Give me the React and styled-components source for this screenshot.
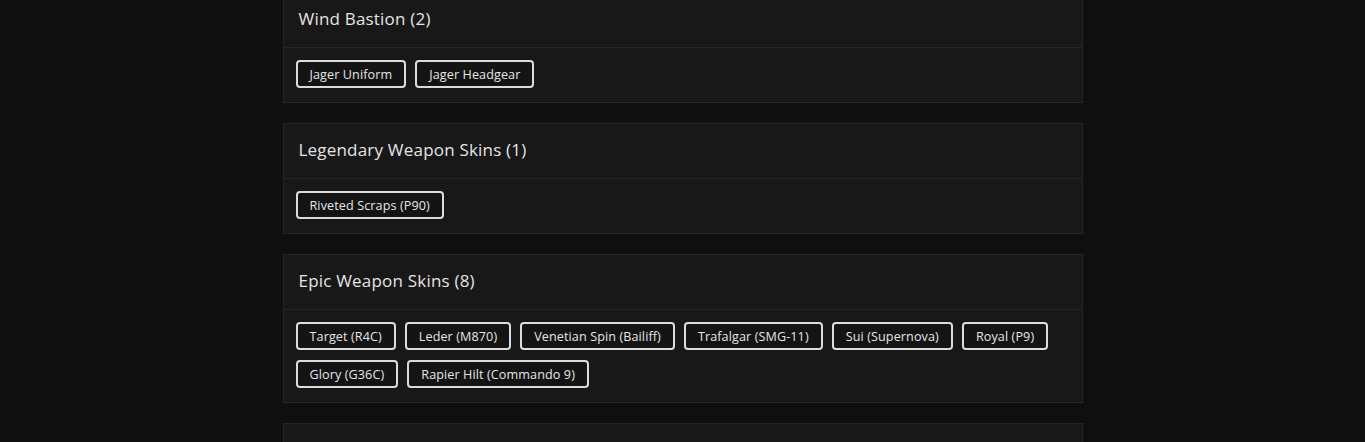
import React from 'react';
import styled, { createGlobalStyle } from 'styled-components';

const GlobalStyle = createGlobalStyle`
  html, body {
    margin: 0;
    padding: 0;
    background: #0f0f0f;
    overflow: hidden;
  }
  body {
    font-family: 'Open Sans', 'Noto Sans', sans-serif;
    color: #e2e2e2;
  }
`;

const Page = styled.div`
  width: 800px;
  margin: -8px auto 0;
  display: flex;
  flex-direction: column;
  gap: 20px;
`;

const Card = styled.section`
  background: #181818;
  border: 1px solid #262626;
`;

const CardHeader = styled.div`
  height: 55px;
  box-sizing: border-box;
  display: flex;
  align-items: center;
  padding: 0 15px 3px;
  border-bottom: 1px solid #262626;
`;

const CardTitle = styled.h3`
  margin: 0;
  font-size: 17px;
  font-weight: 500;
  color: #e4e4e4;
  letter-spacing: 0.2px;
`;

const CardBody = styled.div`
  min-height: 28px;
  padding: 12px 12px 14px;
  display: flex;
  flex-wrap: wrap;
  gap: 10px 9px;
`;

const Tag = styled.button`
  height: 28px;
  box-sizing: border-box;
  padding: 0 12px;
  border: 2px solid #dcdcdc;
  border-radius: 4px;
  background: #141414;
  color: #e6e6e6;
  font-family: inherit;
  font-size: 12.6px;
  letter-spacing: 0.1px;
  cursor: pointer;
`;

const groups = [
  { title: 'Wind Bastion (2)', items: ['Jager Uniform', 'Jager Headgear'] },
  { title: 'Legendary Weapon Skins (1)', items: ['Riveted Scraps (P90)'] },
  {
    title: 'Epic Weapon Skins (8)',
    items: [
      'Target (R4C)',
      'Leder (M870)',
      'Venetian Spin (Bailiff)',
      'Trafalgar (SMG-11)',
      'Sui (Supernova)',
      'Royal (P9)',
      'Glory (G36C)',
      'Rapier Hilt (Commando 9)',
    ],
  },
];

export default function App() {
  return (
    <>
      <GlobalStyle />
      <Page>
        {groups.map((g) => (
          <Card key={g.title}>
            <CardHeader>
              <CardTitle>{g.title}</CardTitle>
            </CardHeader>
            <CardBody>
              {g.items.map((item) => (
                <Tag key={item}>{item}</Tag>
              ))}
            </CardBody>
          </Card>
        ))}
        {/* next group starts below the fold */}
        <Card>
          <CardHeader />
        </Card>
      </Page>
    </>
  );
}
